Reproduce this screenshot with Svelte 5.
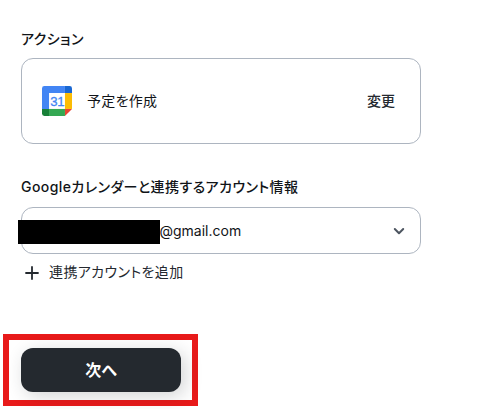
<script lang="ts">
    let account = $state('@gmail.com');
</script>

<main>
    <section class="field">
        <h2 class="label">アクション</h2>
        <div class="card">
            <svg class="calendar" viewBox="0 0 200 200" aria-hidden="true">
                <path fill="#fff" d="M47 47h106v106H47z" />
                <path fill="#ea4335" d="M153 200l47-47h-47z" />
                <path fill="#fbbc04" d="M200 47h-47v106h47z" />
                <path fill="#34a853" d="M153 153H47v47h106z" />
                <path fill="#188038" d="M0 153v31a16 16 0 0 0 16 16h31v-47z" />
                <path fill="#1967d2" d="M200 47V16a16 16 0 0 0-16-16h-31v47z" />
                <path fill="#4285f4" d="M153 0H16A16 16 0 0 0 0 16v137h47V47h106z" />
                <text x="55" y="134">31</text>
            </svg>
            <span class="action">予定を作成</span>
            <button class="change">変更</button>
        </div>
    </section>

    <section class="field account">
        <h2 class="label">Googleカレンダーと連携するアカウント情報</h2>
        <div class="select">
            <span class="mask"></span>
            <span class="address">{account}</span>
            <svg class="chevron" viewBox="0 0 12 8" aria-hidden="true">
                <path d="M1.8 2L6 6.2 10.2 2" />
            </svg>
        </div>
        <button class="add">
            <svg viewBox="0 0 14 14" aria-hidden="true"><path d="M7 1v12M1 7h12" /></svg>
            <span>連携アカウントを追加</span>
        </button>
    </section>

    <div class="highlight">
        <button class="next">次へ</button>
    </div>
</main>

<style>
    :global(body) {
        margin: 0;
        background: #fff;
        overflow: hidden;
    }

    main {
        box-sizing: border-box;
        width: 477px;
        height: 409px;
        padding-top: 29px;
        color: #111418;
        font-family: Inter, 'Noto Sans CJK JP', sans-serif;
        font-size: 14px;
        font-feature-settings: 'palt';
    }

    button {
        border: none;
        padding: 0;
        background: none;
        color: #24292f;
        font: inherit;
        font-feature-settings: inherit;
    }

    .field {
        width: 400px;
        margin-left: 21px;
    }

    .account {
        margin-top: 33px;
    }

    .label {
        height: 20px;
        margin: 0 0 9px;
        font-size: 14px;
        font-weight: 500;
        letter-spacing: 0.43px;
        line-height: 20px;
        white-space: nowrap;
    }

    .card {
        box-sizing: border-box;
        display: flex;
        align-items: center;
        height: 86px;
        padding: 0 25px 0 20px;
        border: 1px solid #adb5c0;
        border-radius: 12px;
    }

    .calendar {
        width: 30px;
        height: 30px;
        margin-right: 15px;
    }

    .calendar text {
        fill: #4285f4;
        stroke: #4285f4;
        stroke-width: 2;
        font-family: 'Liberation Sans', sans-serif;
        font-size: 88px;
        letter-spacing: -3px;
    }

    .action {
        padding-bottom: 2px;
        letter-spacing: 0.3px;
    }

    .change {
        margin-left: auto;
        padding-bottom: 2px;
        font-weight: 500;
    }

    /* account dropdown */
    .select {
        box-sizing: border-box;
        display: flex;
        align-items: center;
        height: 47px;
        margin-top: 10px;
        padding-right: 15px;
        border: 1px solid #adb5c0;
        border-radius: 12px;
    }

    .mask {
        width: 142px;
        height: 24px;
        margin: 3px 0 0 -4px;
        background: #000;
    }

    .address {
        margin-left: -0.5px;
    }

    .chevron {
        width: 12px;
        height: 8px;
        margin-left: auto;
        padding-top: 1px;
        fill: none;
        stroke: #4d5560;
        stroke-width: 2;
        stroke-linecap: round;
        stroke-linejoin: round;
    }

    .add {
        display: flex;
        align-items: center;
        gap: 10px;
        height: 20px;
        margin: 9px 0 0 4px;
        letter-spacing: 0.38px;
    }

    .add span {
        padding-bottom: 4px;
    }

    .add svg {
        width: 14px;
        height: 14px;
        margin-bottom: 1px;
        fill: none;
        stroke: #24292f;
        stroke-width: 1.8;
        stroke-linecap: round;
    }

    /* red frame around the submit button */
    .highlight {
        box-sizing: border-box;
        width: 195px;
        height: 72px;
        margin: 51px 0 0 3px;
        padding: 8px 0 0 12px;
        border: 6px solid #e81a1a;
    }

    .next {
        display: block;
        width: 160px;
        height: 44px;
        padding-bottom: 2px;
        border-radius: 12px;
        background: #24292f;
        box-shadow: 4px 4px 18px rgba(36, 41, 47, 0.2);
        color: #fff;
        font-size: 16px;
        font-weight: 700;
    }
</style>
